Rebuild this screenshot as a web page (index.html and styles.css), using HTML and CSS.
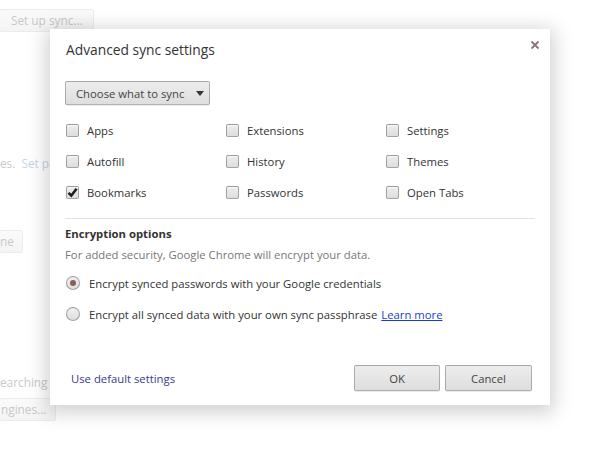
FILE: index.html
```html
<!DOCTYPE html>
<html>
<head>
<meta charset="utf-8">
<link rel="stylesheet" href="styles.css">
</head>
<body>
<div class="page">
  <div class="bg-btn bg-sync">Set up sync...</div>
  <div class="bg-text bg-pass">es.&nbsp; <span class="bg-link">Set pa</span></div>
  <div class="bg-btn bg-ne">ne</div>
  <div class="bg-text bg-search">earching f</div>
  <div class="bg-btn bg-engines">ngines...</div>
</div>

<div class="dialog">
  <div class="header">
    <div class="title">Advanced sync settings</div>
    <svg class="close" width="10" height="10" viewBox="0 0 10 10"><path d="M1.5 1.5L8.5 8.5M8.5 1.5L1.5 8.5" stroke="#8c7479" stroke-width="1.8" fill="none"/></svg>
  </div>
  <div class="content">
    <div class="dropdown">Choose what to sync <span class="tri"></span></div>
    <div class="grid">
      <label class="item"><span class="cb"></span>Apps</label>
      <label class="item"><span class="cb"></span>Extensions</label>
      <label class="item"><span class="cb"></span>Settings</label>
      <label class="item"><span class="cb"></span>Autofill</label>
      <label class="item"><span class="cb"></span>History</label>
      <label class="item"><span class="cb"></span>Themes</label>
      <label class="item"><span class="cb checked"><svg width="11" height="11" viewBox="0 0 11 11"><path d="M1.5 5.8L4.3 8.6L9.6 1.8" stroke="#1e1e1e" stroke-width="2.6" fill="none"/></svg></span>Bookmarks</label>
      <label class="item"><span class="cb"></span>Passwords</label>
      <label class="item"><span class="cb"></span>Open Tabs</label>
    </div>
    <div class="sep"></div>
    <div class="enc-title">Encryption options</div>
    <div class="enc-desc">For added security, Google Chrome will encrypt your data.</div>
    <label class="radio-row"><span class="radio checked"><span class="dot"></span></span>Encrypt synced passwords with your Google credentials</label>
    <label class="radio-row"><span class="radio"></span>Encrypt all synced data with your own sync passphrase <a class="link">Learn more</a></label>
  </div>
  <div class="footer">
    <a class="default-link">Use default settings</a>
    <div class="buttons">
      <div class="btn">OK</div>
      <div class="btn">Cancel</div>
    </div>
  </div>
</div>
</body>
</html>
```

FILE: styles.css
```css
html, body {
  margin: 0;
  padding: 0;
  width: 600px;
  height: 450px;
  overflow: hidden;
  background: #fff;
  font-family: "Open Sans", "Noto Sans", sans-serif;
  font-size: 11.3px;
  color: #333;
}

.page {
  position: relative;
  width: 600px;
  height: 450px;
  display: flex;
  flex-direction: column;
  align-items: flex-start;
}

.bg-btn {
  border: 1px solid #ececec;
  background: linear-gradient(#fafafa, #f4f4f4);
  border-radius: 2px;
  color: #c8c8c8;
  height: 21px;
  line-height: 21px;
  padding: 0 8px;
  white-space: nowrap;
  font-size: 11.8px;
}

.bg-text {
  color: #c9c9c9;
  white-space: nowrap;
  line-height: 16px;
  font-size: 11.8px;
}

.bg-link { color: #c6d5e6; }

.bg-sync { margin: 9px 0 0 -1px; padding: 0 10px 0 11px; }
.bg-pass { margin: 123px 0 0 0; }
.bg-ne { margin: 59px 0 0 -1px; padding: 0 8px 0 0; }
.bg-search { margin: 121px 0 0 0; }
.bg-engines { margin: 8px 0 0 -1px; padding: 0 9px 0 1px; }

.dialog {
  position: absolute;
  left: 50px;
  top: 29px;
  width: 500px;
  height: 376px;
  background: #fff;
  box-shadow: 0 4px 18px 4px rgba(0, 0, 0, 0.18);
  display: flex;
  flex-direction: column;
  box-sizing: border-box;
}

.header {
  display: flex;
  justify-content: space-between;
  align-items: flex-start;
  padding: 11px 10px 0 16px;
}

.title {
  font-size: 13.8px;
  line-height: 20px;
  color: #333;
}

.content {
  padding: 0 15px 0 15px;
  display: flex;
  flex-direction: column;
  flex: 1;
}

.dropdown {
  margin-top: 21px;
  align-self: flex-start;
  width: 145px;
  height: 24px;
  box-sizing: border-box;
  border: 1px solid rgba(0, 0, 0, 0.25);
  border-radius: 2px;
  background: linear-gradient(#ededed, #dedede);
  box-shadow: 0 1px 0 rgba(0, 0, 0, 0.08);
  padding: 0 5px 0 10px;
  display: flex;
  align-items: center;
  justify-content: space-between;
  color: #444;
  white-space: nowrap;
}

.tri {
  width: 0;
  height: 0;
  border-left: 4.5px solid transparent;
  border-right: 4.5px solid transparent;
  border-top: 5px solid #333;
}

.grid {
  margin-top: 12px;
  display: grid;
  grid-template-columns: 160px 160px 150px;
  grid-auto-rows: 26px;
  row-gap: 5px;
}

.item {
  display: flex;
  align-items: center;
  gap: 8px;
  padding-left: 1px;
  color: #333;
}

.cb {
  width: 13px;
  height: 13px;
  box-sizing: border-box;
  border: 1px solid rgba(0, 0, 0, 0.3);
  border-radius: 2px;
  background: linear-gradient(#ededed, #dedede);
  box-shadow: inset 0 1px 1px rgba(255, 255, 255, 0.7);
  display: flex;
  align-items: center;
  justify-content: center;
}

.sep {
  margin-top: 13px;
  height: 1px;
  background: #e2e2e2;
}

.enc-title {
  margin-top: 6px;
  font-weight: bold;
  line-height: 18px;
  color: #333;
}

.enc-desc {
  margin-top: 3px;
  line-height: 18px;
  color: #777;
}

.radio-row {
  margin-top: 8px;
  height: 22px;
  display: flex;
  align-items: center;
  gap: 9px;
  padding-left: 1px;
  color: #333;
  white-space: nowrap;
}

.radio-row + .radio-row {
  margin-top: 9px;
}

.radio {
  width: 14px;
  height: 14px;
  box-sizing: border-box;
  border-radius: 50%;
  border: 1px solid rgba(0, 0, 0, 0.3);
  background: linear-gradient(#f0f0f0, #dedede);
  display: flex;
  align-items: center;
  justify-content: center;
}

.dot {
  width: 6px;
  height: 6px;
  border-radius: 50%;
  background: #8a5f5c;
}

.link {
  color: #1a3ccc;
  text-decoration: underline;
  margin-left: -5px;
}

.footer {
  display: flex;
  justify-content: space-between;
  align-items: center;
  padding: 0 18px 14px 21px;
}

.default-link {
  color: #3a3a8e;
}

.buttons {
  display: flex;
  gap: 5px;
}

.btn {
  width: 86px;
  height: 26px;
  box-sizing: border-box;
  border: 1px solid rgba(0, 0, 0, 0.25);
  border-radius: 2px;
  background: linear-gradient(#ededed, #dedede);
  box-shadow: 0 1px 0 rgba(0, 0, 0, 0.08);
  display: flex;
  align-items: center;
  justify-content: center;
  color: #444;
}

.btn + .btn {
  width: 87px;
}
```
